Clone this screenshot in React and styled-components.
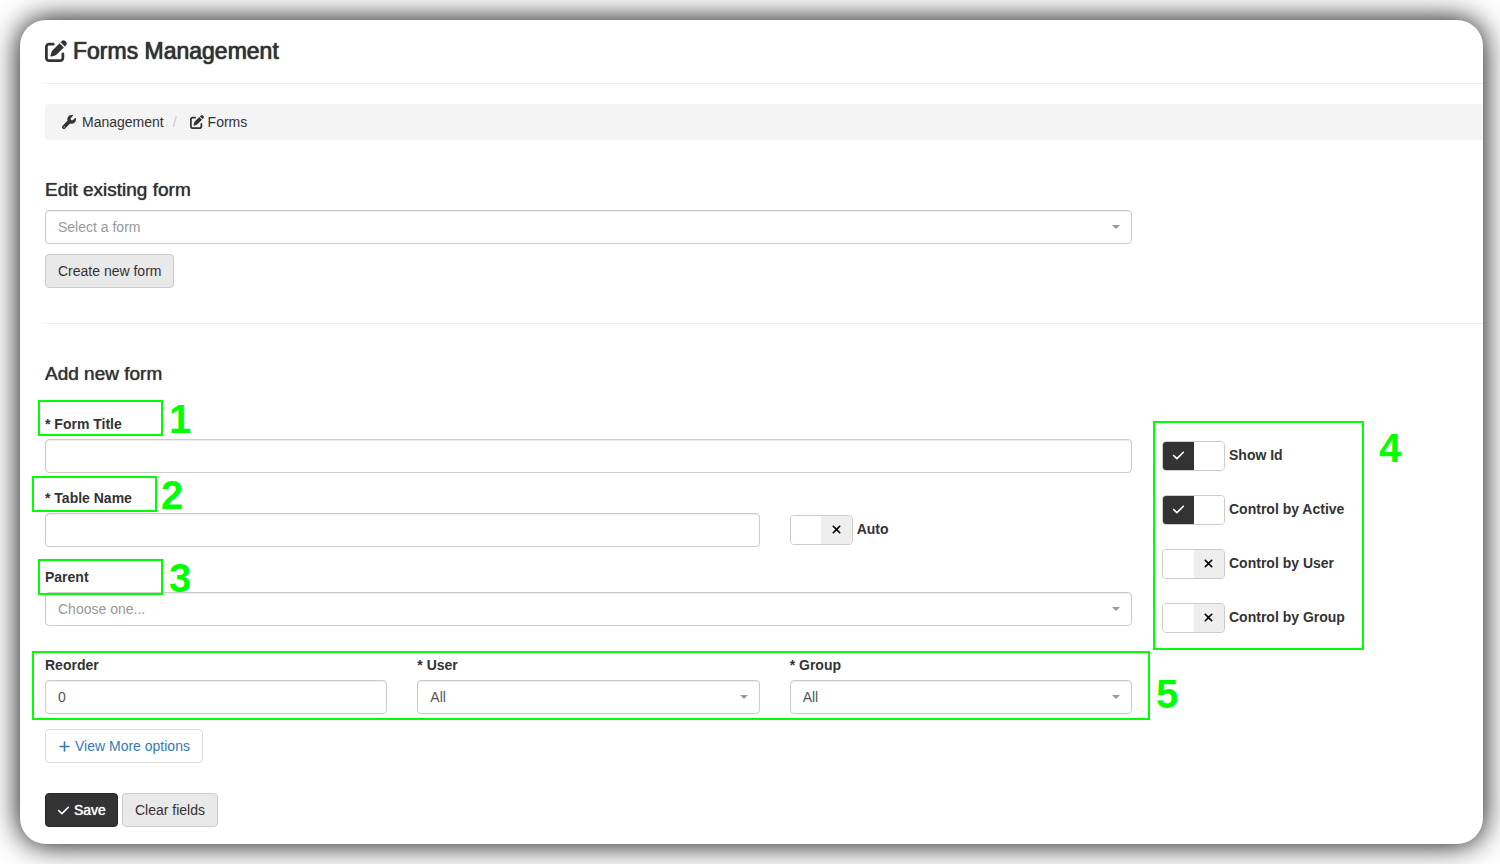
//Libraries
import React, { useState } from 'react'
import styled, { createGlobalStyle } from 'styled-components'

//Icons
import { FaPenToSquare, FaWrench, FaCheck, FaXmark, FaPlus } from 'react-icons/fa6'


const toggles = [
    { id: 'showId',        label: 'Show Id',           on: true },
    { id: 'controlActive', label: 'Control by Active', on: true },
    { id: 'controlUser',   label: 'Control by User',   on: false },
    { id: 'controlGroup',  label: 'Control by Group',  on: false },
]


const Toggle = (props) => {

    const [on, setOn] = useState(props.on);

    return (
        <ToggleRow htmlFor={props.id}>
            <Track>
                <Half $on={on}>{on ? <FaCheck size={13} /> : null}</Half>
                <Half $off={!on}>{on ? null : <FaXmark size={13} />}</Half>
                <input id={props.id} type="checkbox" checked={on} onChange={(e) => setOn(e.target.checked)} />
            </Track>
            {props.label}
        </ToggleRow>
    )
}


const Pulldown = (props) => (
    <PulldownWrap>
        <Select
            id           = {props.id}
            aria-label   = {props.label}
            defaultValue = ""
            $placeholder = {props.placeholder}
        >
            <option value="">{props.text}</option>
        </Select>
    </PulldownWrap>
)


// green box with its number, drawn over the parent
const Callout = (props) => (
    <CalloutBox $box={props.box}>
        <CalloutNumber $top={props.top} $gap={props.gap}>{props.number}</CalloutNumber>
    </CalloutBox>
)


const App = () => {
    return (
        <>
            <GlobalStyle />
            <Card>
                <PageTitle>
                    <FaPenToSquare size={22} />
                    Forms Management
                </PageTitle>

                <Breadcrumb aria-label="Breadcrumb">
                    <Crumb href="#management"><FaWrench size={14} />Management</Crumb>
                    <Slash>/</Slash>
                    <Crumb href="#forms" $tight><FaPenToSquare size={14} />Forms</Crumb>
                </Breadcrumb>

                <Columns>
                    <div>
                        <SectionTitle>Edit existing form</SectionTitle>
                        <Pulldown id="existing" label="Edit existing form" text="Select a form" placeholder />
                        <ButtonRow $top={10}>
                            <Button type="button">Create new form</Button>
                        </ButtonRow>
                    </div>
                </Columns>

                <Divider />

                <Columns as="form" onSubmit={(e) => e.preventDefault()}>
                    <div>
                        <SectionTitle $spaced>Add new form</SectionTitle>

                        <Field $bottom={15}>
                            <Label htmlFor="title">* Form Title</Label>
                            <Input id="title" type="text" />
                            <Callout number="1" box={{ left: -7, top: -14, width: 125, height: 36 }} gap={8} top={-3} />
                        </Field>

                        <Thirds $bottom={20}>
                            <Field $span={2}>
                                <Label htmlFor="table">* Table Name</Label>
                                <Input id="table" type="text" />
                                <Callout number="2" box={{ left: -13, top: -12, width: 125, height: 36 }} gap={6} top={-3} />
                            </Field>
                            <AutoCell>
                                <Toggle id="auto" label="Auto" on={false} />
                            </AutoCell>
                        </Thirds>

                        <Field $bottom={29}>
                            <Label htmlFor="parent">Parent</Label>
                            <Pulldown id="parent" text="Choose one..." placeholder />
                            <Callout number="3" box={{ left: -7, top: -8, width: 125, height: 36 }} gap={8} top={-3} />
                        </Field>

                        <Thirds $bottom={15}>
                            <div>
                                <Label htmlFor="reorder">Reorder</Label>
                                <Input id="reorder" type="text" defaultValue="0" />
                            </div>
                            <div>
                                <Label htmlFor="user">* User</Label>
                                <Pulldown id="user" text="All" />
                            </div>
                            <div>
                                <Label htmlFor="group">* Group</Label>
                                <Pulldown id="group" text="All" />
                            </div>
                            <Callout number="5" box={{ left: -13, top: -4, right: -18, height: 69 }} gap={8} top={21} />
                        </Thirds>

                        <Button type="button" $kind="link"><FaPlus size={13} />View More options</Button>

                        <ButtonRow $top={30}>
                            <Button type="submit" $kind="dark"><FaCheck size={13} />Save</Button>
                            <Button type="reset">Clear fields</Button>
                        </ButtonRow>
                    </div>

                    <Side>
                        {toggles.map((item) => <Toggle key={item.id} {...item} />)}
                        <Callout number="4" box={{ left: -9, top: -20, width: 211, height: 229 }} gap={17} top={5} />
                    </Side>
                </Columns>
            </Card>
        </>
    )
}


const GlobalStyle = createGlobalStyle`
    * {
        box-sizing: border-box;
    }

    body {
        margin: 0;
        background: #fff;
        color: #333;
        font-family: "Liberation Sans", Arial, sans-serif;
        font-size: 14px;
        line-height: 20px;
    }

    input, select, button {
        font: inherit;
    }
`

const Card = styled.main`
    min-height: calc(100vh - 40px);
    margin: 20px 17px 20px 20px;
    padding: 0 0 17px 25px;
    overflow: hidden;
    background: #fff;
    border-radius: 26px;
    box-shadow: 0 0 30px #000;
`

const PageTitle = styled.h1`
    display: flex;
    align-items: center;
    gap: 6px;
    height: 64px;
    margin: 0 0 20px;
    padding-bottom: 2px;
    border-bottom: 1px solid #eee;
    font-size: 23px;
    font-weight: 400;
    text-shadow: 0 0 1px #333, 0 0 1px #333;
`

const Breadcrumb = styled.nav`
    display: flex;
    padding: 8px 17px;
    background: #f4f4f4;
    border-radius: 4px 0 0 4px;
`

const Crumb = styled.a`
    display: flex;
    align-items: center;
    gap: ${props => props.$tight ? '4px' : '6px'};
    color: #333;
    text-decoration: none;
`

const Slash = styled.span`
    padding: 0 13px 0 9px;
    color: #ccc;
`

const Columns = styled.div`
    display: grid;
    grid-template-columns: minmax(0, 1fr) 321px;
    column-gap: 30px;
    padding-top: 40px;
`

const SectionTitle = styled.h2`
    margin: 0 0 ${props => props.$spaced ? '30px' : '10px'};
    font-size: 19px;
    font-weight: 400;
    line-height: 20px;
    text-shadow: 0 0 1px #333;
`

const Divider = styled.hr`
    height: 1px;
    margin: 35px 0 0;
    border: 0;
    background: #eee;
`

const Field = styled.div`
    position: relative;
    grid-column: span ${props => props.$span || 1};
    margin-bottom: ${props => props.$bottom || 0}px;
`

const Thirds = styled.div`
    position: relative;
    display: grid;
    grid-template-columns: repeat(3, minmax(0, 1fr));
    column-gap: 30px;
    margin-bottom: ${props => props.$bottom}px;
`

const Label = styled.label`
    display: block;
    margin-bottom: 5px;
    font-weight: 700;
`

const Input = styled.input`
    display: block;
    width: 100%;
    height: 34px;
    padding: 6px 12px;
    border: 1px solid #ccc;
    border-radius: 4px;
    background: #fff;
    box-shadow: inset 0 1px 1px rgba(0, 0, 0, .08);
    color: #555;
`

const PulldownWrap = styled.div`
    position: relative;

    &::after {
        content: "";
        position: absolute;
        top: 15px;
        right: 12px;
        border: 4px solid transparent;
        border-top-color: #999;
        border-bottom: 0;
        pointer-events: none;
    }
`

const Select = styled(Input).attrs({ as: 'select' })`
    appearance: none;
    color: ${props => props.$placeholder ? '#999' : '#555'};
`

const AutoCell = styled.div`
    padding-top: 27px;
`

const ToggleRow = styled.label`
    display: flex;
    gap: 4px;
    font-weight: 700;
    line-height: 28px;
`

const Track = styled.span`
    position: relative;
    display: flex;
    width: 63px;
    height: 30px;
    overflow: hidden;
    border: 1px solid #ccc;
    border-radius: 4px;

    input {
        position: absolute;
        inset: 0;
        width: 100%;
        height: 100%;
        margin: 0;
        opacity: 0;
        cursor: pointer;
    }
`

const Half = styled.span`
    display: flex;
    flex: 1;
    align-items: center;
    justify-content: center;
    padding-bottom: 2px;
    background: ${props => props.$on ? '#333' : props.$off ? '#eee' : '#fff'};
    color: ${props => props.$on ? '#fff' : '#000'};
`

const Side = styled.div`
    position: relative;
    display: flex;
    flex-direction: column;
    gap: 24px;
    align-self: start;
    align-items: flex-start;
    margin-top: 77px;
`

const ButtonRow = styled.div`
    display: flex;
    gap: 4px;
    margin-top: ${props => props.$top}px;
`

const kinds = {
    dark: 'padding: 0 11px; background: #333; border-color: #262626; color: #fff; text-shadow: 0 0 1px #fff;',
    link: 'background: #fff; border-color: #ddd; color: #337ab7;',
}

const Button = styled.button`
    display: inline-flex;
    align-items: center;
    gap: 4px;
    height: 34px;
    padding: 0 12px;
    border: 1px solid #ccc;
    border-radius: 4px;
    background: #e9e9e9;
    color: #333;
    cursor: pointer;
    ${props => kinds[props.$kind]}
`

const size = (value) => value === undefined ? 'auto' : value + 'px'

const CalloutBox = styled.div`
    position: absolute;
    z-index: 1;
    left: ${props => size(props.$box.left)};
    right: ${props => size(props.$box.right)};
    top: ${props => size(props.$box.top)};
    width: ${props => size(props.$box.width)};
    height: ${props => size(props.$box.height)};
    border: 2px solid #0f0;
    pointer-events: none;
`

const CalloutNumber = styled.span`
    position: absolute;
    left: calc(100% + ${props => props.$gap}px);
    top: ${props => props.$top}px;
    color: #0f0;
    font-size: 40px;
    font-weight: 700;
    line-height: 40px;
`


export default App
